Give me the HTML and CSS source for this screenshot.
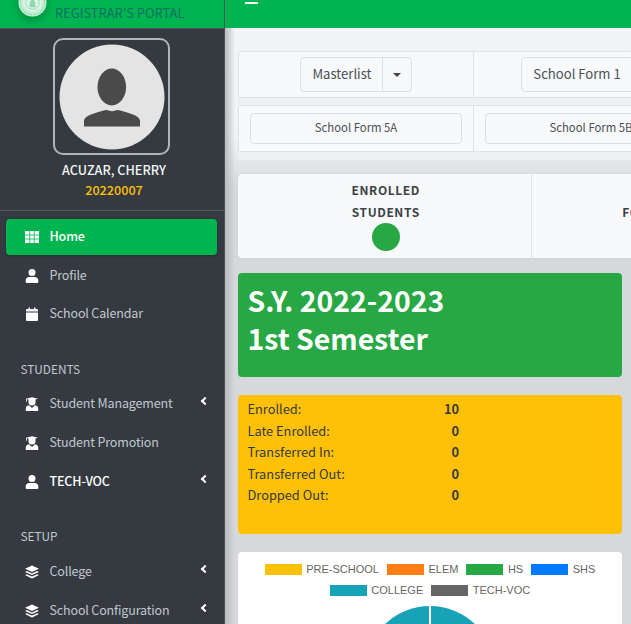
FILE: index.html
```html
<!DOCTYPE html>
<html lang="en">
<head>
<meta charset="utf-8">
<title>Registrar's Portal</title>
<link rel="stylesheet" href="styles.css">
</head>
<body>
<div class="app">
  <aside class="sidebar">
    <div class="brand">
      <svg class="logo" viewBox="0 0 30 30" aria-hidden="true"><circle cx="15" cy="15" r="14.500" fill="#c9efd6"/><circle cx="15" cy="15" r="12.500" fill="none" stroke="#8bd8a9" stroke-width="1.500" stroke-dasharray="1.500 1"/><circle cx="15" cy="15" r="9.500" fill="#d9f4e3"/><circle cx="15" cy="15" r="7" fill="none" stroke="#8bd8a9" stroke-width=".8"/><path d="M12 20c0-4 .8-8 3-9 2.200 1 3 5 3 9z" fill="#8fd8ad"/></svg>
      <div class="brand-text"><div class="brand-top">SPC</div><div class="brand-sub">REGISTRAR'S PORTAL</div></div>
    </div>
    <div class="user">
      <div class="avatar-frame">
        <svg class="avatar" viewBox="0 0 106 106" aria-hidden="true"><circle cx="53" cy="53" r="52.500" fill="#e4e4e4"/><ellipse cx="52.800" cy="43" rx="14.300" ry="18.500" fill="#4a4a4a"/><path d="M25 82.500v-5c0-4 4-6 10-8 6-2 11-3.500 13-3.500 3 1.500 7 1.500 10 0 2 0 7 1.500 13 3.500 6 2 10 4 10 8v5z" fill="#4a4a4a"/></svg>
      </div>
      <div class="user-name">ACUZAR, CHERRY</div>
      <div class="user-id">20220007</div>
    </div>
    <nav class="nav">
      <a class="nav-item active"><svg class="ico" viewBox="0 0 14 14"><path d="M0 1h14v12H0z" fill="#fff"/><path d="M0 5h14M0 9h14M4.700 1v12M9.300 1v12" stroke="#00b44f" stroke-width=".8"/></svg><span>Home</span></a>
      <a class="nav-item"><svg class="ico" viewBox="0 0 14 14"><circle cx="7" cy="3.500" r="3.500" fill="#fff"/><path d="M.7 12.700v-1.200c0-2 1.600-3.500 3.500-3.500h5.600c1.900 0 3.500 1.500 3.500 3.500v1.200c0 .7-.6 1.300-1.300 1.300H2c-.7 0-1.300-.6-1.300-1.300z" fill="#fff"/></svg><span>Profile</span></a>
      <a class="nav-item"><svg class="ico" viewBox="0 0 14 14"><path d="M1 5.500h12v7.200c0 .7-.6 1.300-1.300 1.300H2.300c-.7 0-1.300-.6-1.300-1.300zM1 4.500V3.200c0-.7.600-1.300 1.300-1.300h1.200V.5H5v1.400h4V.5h1.500v1.400h1.200c.7 0 1.300.6 1.300 1.300v1.300z" fill="#fff"/></svg><span>School Calendar</span></a>
      <div class="nav-head first">STUDENTS</div>
      <a class="nav-item"><svg class="ico" viewBox="0 0 14 14"><path d="M1 1.800 7 .3l6 1.500-2.500.8v2.300a3.500 3.500 0 0 1-7 0V2.600l-1.700-.4v2.600H1z" fill="#fff"/><path d="M.8 14v-2.500c0-1.800 1.500-3.200 3.200-3.200L7 11l3-2.700c1.700 0 3.200 1.400 3.200 3.200V14z" fill="#fff"/></svg><span>Student Management</span><i class="chev"></i></a>
      <a class="nav-item"><svg class="ico" viewBox="0 0 14 14"><path d="M1 1.800 7 .3l6 1.500-2.500.8v2.300a3.500 3.500 0 0 1-7 0V2.600l-1.700-.4v2.600H1z" fill="#fff"/><path d="M.8 14v-2.500c0-1.800 1.500-3.200 3.200-3.200L7 11l3-2.700c1.700 0 3.200 1.400 3.200 3.200V14z" fill="#fff"/></svg><span>Student Promotion</span></a>
      <a class="nav-item strong"><svg class="ico" viewBox="0 0 14 14"><circle cx="7" cy="3.500" r="3.500" fill="#fff"/><path d="M.7 12.700v-1.200c0-2 1.600-3.500 3.500-3.500h5.600c1.900 0 3.500 1.500 3.500 3.500v1.200c0 .7-.6 1.300-1.300 1.300H2c-.7 0-1.300-.6-1.300-1.300z" fill="#fff"/></svg><span>TECH-VOC</span><i class="chev"></i></a>
      <div class="nav-head">SETUP</div>
      <a class="nav-item"><svg class="ico" viewBox="0 0 14 14"><path d="M7 .5l7 3.200-7 3.200-7-3.200z" fill="#fff"/><path d="M1.800 6 0 6.900l7 3.200 7-3.200L12.200 6 7 8.400zM1.800 9.200 0 10.100l7 3.400 7-3.400-1.800-.9L7 11.600z" fill="#fff"/></svg><span>College</span><i class="chev"></i></a>
      <a class="nav-item"><svg class="ico" viewBox="0 0 14 14"><path d="M7 .5l7 3.200-7 3.200-7-3.200z" fill="#fff"/><path d="M1.800 6 0 6.900l7 3.200 7-3.200L12.200 6 7 8.400zM1.800 9.200 0 10.100l7 3.400 7-3.400-1.800-.9L7 11.600z" fill="#fff"/></svg><span>School Configuration</span><i class="chev"></i></a>
    </nav>
  </aside>
  <div class="main">
    <header class="topbar"><span class="burger"></span></header>
    <div class="content">
      <section class="forms">
        <div class="form-row tall">
          <div class="form-cell"><div class="split"><span class="split-label">Masterlist</span><span class="split-caret"><i></i></span></div></div>
          <div class="form-cell"><div class="split"><span class="split-label">School Form 1</span><span class="split-caret"><i></i></span></div></div>
        </div>
        <div class="form-row short">
          <div class="form-cell"><div class="wide-btn">School Form 5A</div></div>
          <div class="form-cell"><div class="wide-btn">School Form 5B</div></div>
        </div>
      </section>
      <section class="stats">
        <div class="stat"><div class="stat-title">ENROLLED<br>STUDENTS</div><div class="dot"></div></div>
        <div class="stat second"><div class="stat-title"><br>FOR</div></div>
      </section>
      <section class="banner">S.Y. 2022-2023<br>1st Semester</section>
      <section class="counts">
        <div class="count"><span>Enrolled:</span><b>10</b></div>
        <div class="count"><span>Late Enrolled:</span><b>0</b></div>
        <div class="count"><span>Transferred In:</span><b>0</b></div>
        <div class="count"><span>Transferred Out:</span><b>0</b></div>
        <div class="count"><span>Dropped Out:</span><b>0</b></div>
      </section>
      <section class="chart">
        <div class="legend">
          <span class="lg"><i class="sw yellow"></i>PRE-SCHOOL</span>
          <span class="lg"><i class="sw orange"></i>ELEM</span>
          <span class="lg"><i class="sw green"></i>HS</span>
          <span class="lg"><i class="sw blue"></i>SHS</span>
          <span class="lg"><i class="sw teal"></i>COLLEGE</span>
          <span class="lg"><i class="sw gray"></i>TECH-VOC</span>
        </div>
        <div class="pie-wrap"><div class="pie"></div></div>
      </section>
    </div>
  </div>
</div>
</body>
</html>
```
FILE: styles.css
```css
* { box-sizing: border-box; }
html, body { margin: 0; height: 100%; overflow: hidden; }
body { font-family: "Noto Sans CJK SC", "Open Sans", sans-serif; font-size: 12.500px; color: #343a40; background: #d6d8dc; }
.app { display: flex; width: 631px; height: 624px; overflow: hidden; }

.sidebar { width: 225px; flex: none; height: 624px; overflow: hidden; background: #343a40; border-right: 1px solid #4b545c; color: #c2c7d0; }
.brand { height: 28px; background: #00b44f; display: flex; position: relative; overflow: hidden; }
.logo { width: 29px; height: 29px; position: absolute; left: 18px; top: -12.500px; box-shadow: 0 3px 8px rgba(0,0,0,.25); border-radius: 50%; }
.brand-text { position: absolute; left: 55px; top: -15px; color: #0f6e66; line-height: 18px; font-size: 12.500px; }
.brand-top { height: 19px; color: #0c5f8a; }
.brand-sub { font-size: 12.900px; white-space: nowrap; line-height: 18px; }

.user { height: 183px; border-top: 1px solid #4b545c; border-bottom: 1px solid #4f5962; display: flex; flex-direction: column; align-items: center; padding-top: 9px; }
.avatar-frame { width: 117px; height: 117px; border: 2px solid #adb5bd; border-radius: 10px; display: flex; align-items: center; justify-content: center; margin-left: -1px; }
.avatar { width: 106px; height: 106px; display: block; }
.user-name { margin-top: 5px; padding-left: 4px; font-size: 12.650px; line-height: 20px; font-weight: 500; color: #f2f3f4; }
.user-id { padding-left: 4px; font-size: 12.650px; line-height: 19px; color: #ffc107; font-weight: 500; }

.nav { padding: 8px 7px 0 6px; display: flex; flex-direction: column; }
.nav-item { height: 36px; margin-bottom: 2.700px; display: flex; align-items: center; padding: 0 0 2px 19px; border-radius: 4px; font-size: 12.500px; letter-spacing: -.15px; color: #c2c7d0; position: relative; line-height: 20px; }
.nav-item.active { background: #00b44f; color: #fff; font-weight: 500; box-shadow: 0 1px 3px rgba(0,0,0,.2); }
.nav-item.strong { color: #fff; font-weight: 500; }
.ico { width: 14px; height: 14px; flex: none; margin-right: 10.500px; margin-top: 2px; }
.chev { position: absolute; left: 196px; top: 12px; width: 6px; height: 6px; border-left: 2px solid #fff; border-bottom: 2px solid #fff; transform: rotate(45deg); }
.nav-head { font-size: 11.800px; line-height: 20px; color: #c2c7d0; padding-left: 14.500px; margin-top: 24px; height: 20px; margin-bottom: 8px; }
.nav-head.first { margin-top: 24px; margin-bottom: 7.300px; }

.main { flex: 1; min-width: 0; background: #f4f6f9; }
.topbar { height: 28px; background: #00b44f; position: relative; }
.burger { position: absolute; left: 20px; top: 2px; width: 13px; height: 2px; background: #fff; }
.content { height: 596px; padding: 23px 0 0 13px; width: 406px; overflow: hidden; background: linear-gradient(to bottom, #f3f4f6 0, #f1f2f4 110px, #d6d8dc 160px); position: relative; }
.content::before { content: ""; position: absolute; left: 0; top: 0; bottom: 0; width: 10px; background: linear-gradient(to right, #b8babe, transparent); }
.content > section { position: relative; }

.forms { width: 700px; background: #eff0f2; height: 109px; }
.form-row { display: flex; background: #f8f9fa; border: 1px solid #dee2e6; border-radius: 3px; }
.form-row.tall { height: 47px; margin-bottom: 7px; }
.form-row.short { height: 47px; margin-bottom: 8px; }
.form-cell { width: 235px; border-right: 1px solid #dee2e6; display: flex; justify-content: center; align-items: center; flex: none; }
.form-row.short .form-cell { padding: 0 11px; margin-top: -1px; }
.split { display: flex; height: 35px; border: 1px solid #dddfe2; border-radius: 4px; font-size: 13.100px; color: #495057; line-height: 32px; }
.split-label { padding: 0 10px 0 11px; }
.split-caret { width: 29px; border-left: 1px solid #dddfe2; display: flex; align-items: center; justify-content: center; }
.split-caret i { width: 0; height: 0; border: 4px solid transparent; border-top-color: #444; border-bottom: 0; }
.wide-btn { width: 100%; height: 31px; border: 1px solid #dddfe2; border-radius: 4px; text-align: center; font-size: 11.350px; line-height: 27px; color: #495057; }

.stats { display: flex; margin-top: 14px; width: 700px; height: 84px; background: #f8f9fa; border-radius: 4px; box-shadow: 0 0 1px rgba(0,0,0,.2); }
.stat { width: 294px; border-right: 1px solid #dee2e6; text-align: center; padding: 5px 0 0 2.500px; flex: none; }
.stat.second { width: 204px; border: 0; }
.stat-title { font-size: 12px; font-weight: 700; letter-spacing: .6px; line-height: 22px; color: #3c4248; }
.dot { width: 28px; height: 28px; border-radius: 50%; background: #28a745; margin: 0 auto; }

.banner { margin-top: 15px; width: 384px; height: 104px; background: #28a745; border-radius: 4px; color: #fff; font-size: 28.400px; font-weight: 700; line-height: 38px; padding: 8px 9.500px 0; }
.counts { margin-top: 18px; width: 384px; height: 139px; background: #ffc107; border-radius: 4px; padding: 3px 10px 0 9.500px; }
.count { display: flex; width: 211.500px; justify-content: space-between; font-size: 12.800px; line-height: 21.600px; color: #343a40; }
.count b { font-weight: 600; }

.chart { margin-top: 18px; width: 384px; height: 200px; background: #fff; border-radius: 4px; }
.legend { width: 340px; margin: 0 auto; padding-top: 7px; display: flex; flex-wrap: wrap; justify-content: center; column-gap: 8px; font-family: "Liberation Sans", Arial, sans-serif; font-size: 11px; line-height: 21px; color: #666; }
.lg { display: inline-flex; align-items: center; }
.sw { width: 37px; height: 11px; margin-right: 4.500px; display: block; }
.yellow { background: #ffc107; } .orange { background: #fd7e14; } .green { background: #28a745; } .blue { background: #007bff; } .teal { background: #17a2b8; } .gray { background: #666; }
.pie-wrap { display: flex; justify-content: center; padding-top: 5px; }
.pie { width: 130px; height: 130px; border-radius: 50%; background: linear-gradient(to right, #17a2b8 49.200%, #fff 49.200%, #fff 50.800%, #17a2b8 50.800%); }
```
